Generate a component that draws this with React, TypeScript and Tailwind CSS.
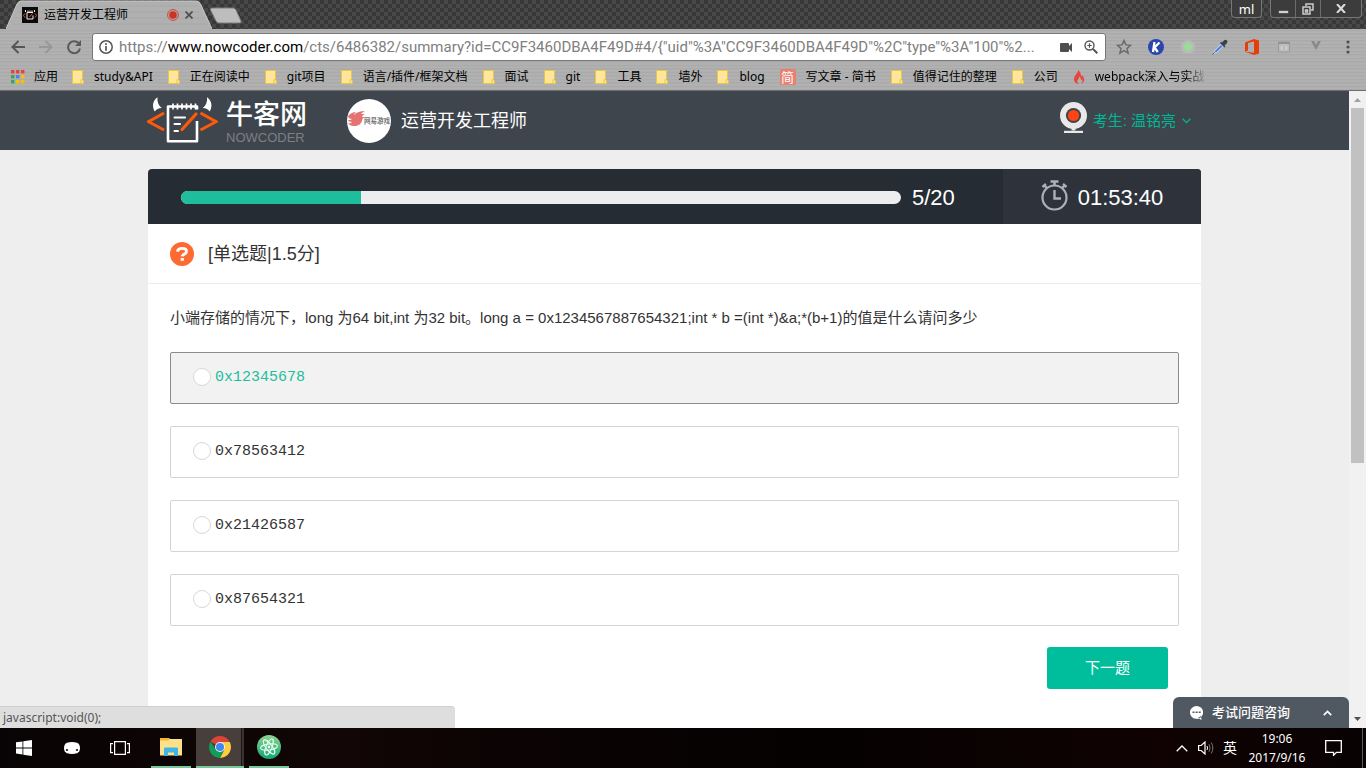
import { useState } from "react";
import type { ReactNode } from "react";

const UI = "font-['Noto_Sans','Noto_Sans_CJK_SC',sans-serif]";
const BRUSHED =
  "bg-[#b0b0b0] bg-[repeating-linear-gradient(0deg,#a6a6a6_0px,#b6b6b6_2px,#a8a8a8_3px,#b3b3b3_5px,#acacac_7px)]";

function Folder() {
  return (
    <svg className="h-4 w-3 shrink-0" viewBox="0 0 12 16">
      <path d="M.5 1.500h10v9.500l1 .8v2.700H.5z" fill="#ffe69a" stroke="#e8c545" />
      <path d="M9 14.500v-3.800h1.500" fill="none" stroke="#e8c545" />
    </svg>
  );
}

function AppsGrid() {
  const colors = ["#ea4335", "#ea4335", "#ea4335", "#34a853", "#4285f4", "#fbbc05", "#34a853", "#fbbc05", "#fbbc05"];
  return (
    <svg className="size-[14px] shrink-0" viewBox="0 0 14 14">
      {colors.map((c, i) => (
        <rect key={i} x={(i % 3) * 5} y={Math.floor(i / 3) * 5} width="3.4" height="3.4" fill={c} />
      ))}
    </svg>
  );
}

function Jian() {
  return (
    <span className="flex size-4 shrink-0 items-center justify-center bg-[#ea8070] text-[13px] leading-4 text-white">
      简
    </span>
  );
}

function Flame() {
  return (
    <svg className="h-4 w-3 shrink-0" viewBox="0 0 12 16">
      <path d="M5 1c.5 3-3.500 4.800-4 8.500C.7 12.500 3 15 6 15c-2-1-2.300-2.800-1-4.500 1-1.200 1.200-2 1-3 1.600 1 2.400 2.500 2 4 .8-.3 1.200-.8 1.300-1.500.7 1.800 0 3.700-1.500 4.800 2.700-.8 3.900-3 3.200-5.300-.4-1.500-1.300-2.200-1.600-3.300-.5.6-.6 1-.6 1.600C7.500 6 8.300 3.500 5 1z" fill="#e8443a" />
    </svg>
  );
}

const bookmarks: { label: string; icon?: ReactNode }[] = [
  { label: "study&API" },
  { label: "正在阅读中" },
  { label: "git项目" },
  { label: "语言/插件/框架文档" },
  { label: "面试" },
  { label: "git" },
  { label: "工具" },
  { label: "墙外" },
  { label: "blog" },
  { label: "写文章 - 简书", icon: <Jian /> },
  { label: "值得记住的整理" },
  { label: "公司" },
];

function TitleBar() {
  return (
    <div className="flex h-[29px] items-start justify-between overflow-hidden bg-[#3f3f3f] bg-[conic-gradient(#484848_25%,#383838_0_50%,#484848_0_75%,#383838_0)] bg-[size:8px_8px]">
      <div className="flex items-start pl-[6px]">
        <div className="relative h-[29px] w-[206px]">
          <svg className="absolute inset-0 size-full" viewBox="0 0 206 29">
            <path d="M0 29 11 4Q12.500 1 15 1H190Q193 1 194.500 4L206 29z" fill="#b0b0b0" />
            <path d="M0 29 11 4Q12.500 1 15 1H190Q193 1 194.500 4L206 29" fill="none" stroke="#c9c9c9" />
            <path d="M14 6h178M11 12h182M9 18h190M6 24h196" stroke="#a8a8a8" />
          </svg>
          <div className={`relative flex h-[29px] items-center pl-4 text-xs text-black ${UI}`}>
            <svg className="size-4" viewBox="0 0 16 16">
              <path d="M0 0h16v16H0z" fill="#0b0b0b" />
              <path d="M3.500 3v2M12.500 3v2M5 5.500V12h6V8.500M5 5.500h6M6 3.500v2M8 3.500v2M10 3.500v2" fill="none" stroke="#eee" />
              <path d="m3 6.500-1.500 2 1.500 2M13 6.500l1.500 2-1.500 2M10.500 6.500 7.500 10" fill="none" stroke="#e0502e" />
            </svg>
            <span className="ml-[6px] flex-1">运营开发工程师</span>
            <svg className="size-3" viewBox="0 0 12 12">
              <circle cx="6" cy="6" r="5.400" fill="none" stroke="#cf4436" />
              <circle cx="6" cy="6" r="3.800" fill="#cb3324" />
            </svg>
            <button aria-label="关闭标签页" className="mr-[19px] ml-[6px]">
              <svg className="size-[8px]" viewBox="0 0 8 8">
                <path d="m.5.5 7 7m0-7-7 7" stroke="#4d4d4d" strokeWidth="1.700" />
              </svg>
            </button>
          </div>
        </div>
        <button aria-label="新标签页" className="mt-[7px] -ml-[3px]">
          <svg className="h-[17px] w-[34px]" viewBox="0 0 34 17">
            <path d="M3.500 1H24q2 0 3 2l5 11q.8 2-1.500 2H10q-2 0-3-2L1.500 3q-.8-2 2-2z" fill="#bdbdbd" stroke="#7d7d7d" />
          </svg>
        </button>
      </div>
      <div className="flex gap-2 pr-1">
        <button className={`h-[18px] w-[31px] rounded-b border border-t-0 border-[#777] bg-[#3c3c3c] text-[13px] leading-[18px] text-white ${UI}`}>
          ml
        </button>
        <div className="flex h-[18px] rounded-b border border-t-0 border-[#777] bg-[#3c3c3c]">
          <button aria-label="最小化" className="flex w-6 items-center justify-center">
            <svg className="h-3 w-[11px]" viewBox="0 0 11 12"><path d="M.5 7.500h10v3H.5z" fill="#d0d0d0" stroke="#222" strokeWidth=".5" /></svg>
          </button>
          <button aria-label="还原" className="flex w-[26px] items-center justify-center border-x border-[#6c6c6c]">
            <svg className="size-3" viewBox="0 0 12 12" fill="none" stroke="#ccc" strokeWidth="1.500">
              <path d="M4 3V1h7v6H9" /><path d="M1 4h7v7H1zM3.500 7h2v2h-2z" />
            </svg>
          </button>
          <button aria-label="关闭" className="flex w-[40px] items-center justify-center">
            <svg className="h-[9px] w-[10px]" viewBox="0 0 10 9"><path d="m1 0 8 9M9 0 1 9" stroke="#ddd" strokeWidth="2" /></svg>
          </button>
        </div>
      </div>
    </div>
  );
}

function ToolButton({ label, children }: { label: string; children: ReactNode }) {
  return (
    <button aria-label={label} className="flex h-7 w-8 items-center justify-center">
      {children}
    </button>
  );
}

const URL_TAIL = '/cts/6486382/summary?id=CC9F3460DBA4F49D#4/{"uid"%3A"CC9F3460DBA4F49D"%2C"type"%3A"100"%2...';

function Toolbar() {
  return (
    <div className="flex h-9 items-center pr-[2px] pl-1">
      <button aria-label="后退" className="flex w-7 justify-center">
        <svg className="size-[14px]" viewBox="0 0 14 14" fill="none" stroke="#555" strokeWidth="2"><path d="M14 7H1.500M7.500 1l-6 6 6 6" /></svg>
      </button>
      <button aria-label="前进" className="flex w-7 justify-center">
        <svg className="size-[14px]" viewBox="0 0 14 14" fill="none" stroke="#979797" strokeWidth="2"><path d="M0 7h12.500M6.500 1l6 6-6 6" /></svg>
      </button>
      <button aria-label="重新加载" className="flex w-7 justify-center">
        <svg className="size-[14px]" viewBox="0 0 14 14"><path d="M11.600 3.200A6 6 0 1 0 13 8.500" fill="none" stroke="#5a5a5a" strokeWidth="2" /><path d="M14 0v6H8z" fill="#5a5a5a" /></svg>
      </button>
      <div className="ml-1 flex h-7 min-w-0 flex-1 items-center rounded-[3px] border border-[#777] bg-white pr-[7px] pl-[6px]">
        <svg className="size-[14px] shrink-0" viewBox="0 0 14 14"><circle cx="7" cy="7" r="6.200" fill="none" stroke="#555" strokeWidth="1.500" /><path d="M7 3.200v1.700M7 6v4.800" stroke="#555" strokeWidth="1.700" /></svg>
        <div className="relative ml-[6px] min-w-0 flex-1 font-[Roboto,'Noto_Sans',sans-serif] text-[15px] leading-6">
          <div aria-hidden className="overflow-hidden whitespace-nowrap text-[#808080]">
            https://<span className="text-black">www.nowcoder.com</span>{URL_TAIL}
          </div>
          <input aria-label="地址" className="absolute inset-0 w-full bg-transparent text-transparent outline-none" />
        </div>
        <svg className="h-[9px] w-3 shrink-0" viewBox="0 0 12 9"><path d="M0 1q0-1 1-1h7q1 0 1 1v2l3-3v9L9 6v2q0 1-1 1H1Q0 9 0 8z" fill="#4f4f4f" /></svg>
        <svg className="ml-3 size-[14px] shrink-0" viewBox="0 0 14 14" fill="none" stroke="#555"><circle cx="5.500" cy="5.500" r="4.500" strokeWidth="1.400" /><path d="m9 9 4.300 4.300" strokeWidth="2" /><path d="M3.300 5.500h4.400M5.500 3.300v4.400" strokeWidth="1.200" /></svg>
      </div>
      <div className="ml-[2px] flex">
        <ToolButton label="收藏">
          <svg className="size-4" viewBox="0 0 16 16"><path d="m8 1.500 1.900 4.400 4.700.4-3.600 3.100 1.100 4.700L8 11.600l-4.100 2.500L5 9.400 1.400 6.300l4.700-.4z" fill="none" stroke="#6b6b6b" strokeWidth="1.500" /></svg>
        </ToolButton>
        <ToolButton label="扩展 K">
          <svg className="size-4" viewBox="0 0 16 16"><circle cx="8" cy="8" r="8" fill="#2a44b0" /><path d="M6.500 3 5 13M11.500 3.500 6.500 8.500 9.800 13" fill="none" stroke="#fff" strokeWidth="2.300" /></svg>
        </ToolButton>
        <ToolButton label="在线状态">
          <svg className="size-4" viewBox="0 0 16 16"><circle cx="8" cy="8" r="7" fill="#b9b9b9" /><circle cx="8" cy="8" r="4.200" fill="#98dc95" /></svg>
        </ToolButton>
        <ToolButton label="取色器">
          <svg className="size-4" viewBox="0 0 16 16"><path d="M1.500 14.500 2.500 12 9 5.500 11 7.500 4.500 13.500z" fill="#3f7ee0" stroke="#e8eefc" strokeWidth=".8" /><path d="m.5 15.500 2-2" stroke="#555" /><path d="m8 4 4.500 4.500 1-1-1-1 2.500-2.500q1-1.500 0-2.500T12.500 1L10 3.500l-1-.8z" fill="#3a3f49" /></svg>
        </ToolButton>
        <ToolButton label="Office">
          <svg className="h-4 w-[14px]" viewBox="0 0 14 16"><path d="M0 3.500 9 0l5 1.500v13L9 16 0 12.700l9 1V2.500L3 4v7.500l-3 1.200z" fill="#e53e0b" /></svg>
        </ToolButton>
        <ToolButton label="代码片段">
          <svg className="h-3 w-3" viewBox="0 0 12 12"><path d="M.5 1h11v10H.5z" fill="#bcbcbc" stroke="#9a9a9a" /><path d="M0 1h12v2H0z" fill="#929292" /><path d="M4.500 5 3 7l1.500 2m3-4L9 7 7.500 9" fill="none" stroke="#ddd" /></svg>
        </ToolButton>
        <ToolButton label="Vue">
          <svg className="-mt-1 h-[9px] w-[10px]" viewBox="0 0 10 9"><path d="M0 0h3l2 4 2-4h3L5 9z" fill="#888" /></svg>
        </ToolButton>
        <ToolButton label="菜单">
          <svg className="h-[14px] w-[4px]" viewBox="0 0 4 14" fill="#505050"><circle cx="2" cy="2" r="1.600" /><circle cx="2" cy="7" r="1.600" /><circle cx="2" cy="12" r="1.600" /></svg>
        </ToolButton>
      </div>
    </div>
  );
}

function BookmarksBar() {
  return (
    <nav className={`flex h-[25px] items-center overflow-hidden pb-[2px] pl-[11px] text-xs whitespace-nowrap text-black ${UI}`}>
      <a href="#apps" className="mr-[14px] flex items-center gap-[9px]"><AppsGrid />应用</a>
      {bookmarks.map((b) => (
        <a key={b.label} href="#bookmark" className="mr-[15px] flex shrink-0 items-center gap-[10px]">
          {b.icon ?? <Folder />}
          {b.label}
        </a>
      ))}
      <a href="#webpack" className="flex w-[134px] shrink-0 items-center gap-[10px] overflow-hidden [mask-image:linear-gradient(to_right,black_85%,transparent)]">
        <Flame />
        webpack深入与实战
      </a>
    </nav>
  );
}

function Logo() {
  return (
    <a href="#home" aria-label="牛客网" className="flex items-center gap-2">
      <svg className="h-[50px] w-[71px]" viewBox="0 0 71 50" fill="none">
        <path d="M10.500 1.300C6 4.500 4.500 10 7.800 15.500c1.500-2.200 3.700-3.200 7-3.500C11.500 9.500 10 6 10.500 1.300zM60 1.300C64.500 4.500 66 10 62.700 15.500c-1.500-2.200-3.700-3.200-7-3.500C59 9.500 60.500 6 60 1.300z" fill="#fff" />
        <path d="M17 17 1.500 25.700 17 34M53.500 17 69 25.700 53.500 34" stroke="#ff5a0a" strokeWidth="3" />
        <path d="M50 13.500v-3H21v34.800h29V25" stroke="#fff" strokeWidth="2.600" strokeLinejoin="round" />
        <path d="M26 7.500v6M30.500 7.500v6M35 7.500v6M39.500 7.500v6M44 7.500v6M48.500 7.500v6" stroke="#fff" strokeWidth="1.700" />
        <path d="M27.500 21.500H38M27.500 28H33M27.500 35H31" stroke="#fff" strokeWidth="2" strokeLinecap="round" />
        <path d="m49 18-14 15.500" stroke="#ff5a0a" strokeWidth="3.200" strokeLinecap="round" />
      </svg>
      <span className="flex flex-col">
        <span className="font-['Noto_Sans_CJK_SC',sans-serif] text-[27px] leading-[34px] font-medium text-white">牛客网</span>
        <span className="font-['Liberation_Sans',sans-serif] text-[13px] leading-4 text-[#7c8086]">NOWCODER</span>
      </span>
    </a>
  );
}

function SiteHeader() {
  return (
    <header className="bg-[#3e454d]">
      <div className="mx-auto flex h-[59px] max-w-[1055px] items-center justify-between pr-[11px]">
        <div className="flex items-center">
          <Logo />
          <svg className="ml-10 size-11" viewBox="0 0 44 44">
            <circle cx="22" cy="22" r="22" fill="#fff" />
            <path d="M1 17c3-3 5-4 8-4-1 1-2 2-2 3 3-3 6-4 11-4-2 1-3 2-4 3h4c-2 1-3 2-3 3h3c-2 1-3 2-3 4-1 3-4 5-8 5-3 0-5-1-6-3 2 1 3 0 4-1-2 0-4-1-4-2 2 0 3 0 4-1-2 0-4-1-4-3z" fill="#e57372" />
            <text x="17" y="23.500" fill="#777" fontSize="6.500" fontWeight="700" fontFamily="Noto Sans CJK SC, sans-serif">网易游戏</text>
            <path d="M17 25.500h2m3 0h2m3 0h2m3 0h2m3 0h2" stroke="#ccc" />
          </svg>
          <h1 className="ml-[10px] text-lg leading-6 text-white">运营开发工程师</h1>
        </div>
        <button className="flex items-center text-[15px] leading-6 text-[#00b896]">
          <svg className="mb-[6px] h-[31px] w-[27px]" viewBox="0 0 27 31">
            <circle cx="13.500" cy="13.500" r="13.500" fill="#e8e8e8" />
            <path d="M11.500 26h4v2.500h-4z" fill="#e8e8e8" />
            <path d="M4 28.800h19V31H4z" fill="#e8e8e8" />
            <circle cx="13.500" cy="13.500" r="7.600" fill="#3e454d" />
            <circle cx="13.500" cy="13.500" r="5.600" fill="#ff4314" />
          </svg>
          <span className="ml-[6px]">考生: 温铭亮</span>
          <svg className="ml-[6px] h-[6px] w-[9px]" viewBox="0 0 9 6"><path d="m.7.800 3.800 3.800L8.300.8" fill="none" stroke="#00b896" strokeWidth="1.300" /></svg>
        </button>
      </div>
    </header>
  );
}

const options = ["0x12345678", "0x78563412", "0x21426587", "0x87654321"];

function Exam() {
  const [choice, setChoice] = useState("");
  return (
    <main className="mx-auto mt-[19px] w-full max-w-[1053px] flex-1 rounded-t bg-white">
      <div className="flex h-[55px] overflow-hidden rounded-t bg-[#252c33] text-[22px] text-white">
        <div className="flex flex-1 items-center gap-[11px] pt-px pl-[33px]">
          <div role="progressbar" aria-label="答题进度" aria-valuenow={5} aria-valuemin={0} aria-valuemax={20} className="h-[13px] w-[720px] overflow-hidden rounded-full bg-[#ecedef]">
            <div className="h-full w-1/4 bg-[#1ebe9c]" />
          </div>
          <span>5/20</span>
        </div>
        <div className="flex w-[198px] items-center justify-center gap-[10px] bg-[#2e333b] pt-px">
          <svg className="mb-1 h-[31px] w-[27px]" viewBox="0 0 27 31" fill="none" stroke="#a9b1bd">
            <circle cx="13.500" cy="17.500" r="12" strokeWidth="2.200" />
            <path d="M9.500 1.500h8M13.500 1.500v4" strokeWidth="2.600" />
            <path d="m1.500 7 3.500-3M25.500 7 22 4M3.500 5.500 6 8M23.500 5.500 21 8" strokeWidth="2.400" />
            <path d="M13.500 10v8.500h6.500" strokeWidth="2.400" />
          </svg>
          <span>01:53:40</span>
        </div>
      </div>
      <div className="flex h-[60px] items-center gap-[14px] border-b border-[#ebebeb] pl-[22px] text-lg text-[#333]">
        <svg className="size-6" viewBox="0 0 24 24">
          <circle cx="12" cy="12" r="12" fill="#ff6a33" />
          <path d="M7.500 9.600C7.700 7.300 9.500 6.400 12 6.400c2.700 0 4.500 1.100 4.500 3 0 2.700-4 2.500-4.200 5" fill="none" stroke="#fff" strokeWidth="2.900" />
          <path d="M10.700 16h3.200v2.800h-3.200z" fill="#fff" />
        </svg>
        <h2>[单选题|1.5分]</h2>
      </div>
      <form className="px-[22px] pt-[22px] pb-8" onSubmit={(e) => e.preventDefault()}>
        <fieldset>
          <legend className="mb-[22px] text-[15px] leading-6 text-[#333]">
            小端存储的情况下，long 为64 bit,int 为32 bit。long a = 0x1234567887654321;int * b =(int *)&amp;a;*(b+1)的值是什么请问多少
          </legend>
          <div className="flex flex-col gap-[22px]">
            {options.map((o, i) => (
              <label
                key={o}
                className={
                  i === 0
                    ? "flex h-[52px] items-center gap-1 rounded-xs border border-[#8c8c8c] bg-[#f2f2f2] pb-[2px] pl-[22px] text-[#1ebe9c]"
                    : "flex h-[52px] items-center gap-1 rounded-xs border border-[#d4d4d4] bg-white pb-[2px] pl-[22px] text-[#333]"
                }
              >
                <input
                  type="radio"
                  name="answer"
                  checked={choice === o}
                  onChange={() => setChoice(o)}
                  className="size-[18px] appearance-none rounded-full border border-[#d8d8d8] bg-white checked:border-[5px] checked:border-[#1ebe9c]"
                />
                <span className="pt-px font-['Liberation_Mono',monospace] text-[15px] leading-5">{o}</span>
              </label>
            ))}
          </div>
        </fieldset>
        <div className="mt-[21px] flex justify-end pr-[11px]">
          <button className="h-[42px] w-[121px] rounded-[3px] bg-[#00be9c] text-[15px] text-white">下一题</button>
        </div>
      </form>
    </main>
  );
}

function Scrollbar() {
  return (
    <div aria-hidden className="flex w-[17px] shrink-0 flex-col items-center bg-[#f1f1f1] py-[7px]">
      <svg className="h-1 w-[7px] shrink-0" viewBox="0 0 7 4"><path d="M0 4 3.500 0 7 4z" fill="#a0a0a0" /></svg>
      <div className="mt-[6px] h-[57%] w-[13px] bg-[#c1c1c1]" />
      <svg className="mt-auto h-1 w-[7px] shrink-0" viewBox="0 0 7 4"><path d="M0 0h7L3.500 4z" fill="#505050" /></svg>
    </div>
  );
}

function Taskbar() {
  return (
    <footer className={`flex h-10 shrink-0 items-stretch justify-between bg-[#080203] bg-[linear-gradient(to_right,#080304,#120606_25%,#080203_45%,#050101_60%,#100202_85%,#080203)] text-white ${UI}`}>
      <div className="flex">
        <button aria-label="开始" className="flex w-12 items-center justify-center">
          <svg className="size-4" viewBox="0 0 16 16" fill="#fff"><path d="M0 2.300 6.500 1.400v6.100H0zM7.300 1.300 16 0v7.500H7.300zM0 8.400h6.500v6.100L0 13.600zM7.300 8.400H16V16l-8.700-1.300z" /></svg>
        </button>
        <button aria-label="助手" className="flex w-12 items-center justify-center">
          <svg className="h-3 w-4" viewBox="0 0 16 12"><path d="M3 .8Q8-.6 13 .8q3 1.400 3 5.200T13 11.200Q8 12.600 3 11.200 0 9.800 0 6T3 .8z" fill="#fff" /><circle cx="3" cy="8" r="1.100" fill="#111" /><circle cx="13" cy="8" r="1.100" fill="#111" /></svg>
        </button>
        <button aria-label="任务视图" className="flex w-12 items-center justify-center">
          <svg className="h-[14px] w-5" viewBox="0 0 20 14" fill="none" stroke="#fff" strokeWidth="1.200"><path d="M4.600.600h10.800v12.800H4.600zM3 2.600H.6v9H3M17 2.600h2.400v9H17" /></svg>
        </button>
        <button aria-label="文件资源管理器" className="mr-[5px] ml-[7px] flex w-10 items-center justify-center border-b-2 border-[#76c79a]">
          <svg className="h-[18px] w-[22px]" viewBox="0 0 22 18"><path d="M0 0h9l1 1h12v16.500H0z" fill="#fde08a" /><path d="M0 0h9v2.500H0z" fill="#f5b921" /><path d="M4 10.500Q4 9.500 5 9.500h12q1 0 1 1V18h-4v-3.500H8V18H4z" fill="#3fb4e8" /></svg>
        </button>
        <button aria-label="Chrome" className="flex w-12 items-stretch border-b-2 border-b-[#76c79a] bg-[#483e3c]">
          <span className="flex flex-1 items-center justify-center pl-[3px]">
            <svg className="size-[22px]" viewBox="0 0 22 22">
              <path d="M11 11 1.500 5.500A11 11 0 0 1 20.500 5.500z" fill="#db4437" />
              <path d="M11 6h9.800A11 11 0 0 1 11 22l4.300-8.500z" fill="#ffcd40" />
              <path d="M1.500 5.500 6.700 13.500 15.300 13.500 11 22A11 11 0 0 1 1.500 5.500z" fill="#0f9d58" />
              <circle cx="11" cy="11" r="5" fill="#f1f1f1" />
              <circle cx="11" cy="11" r="4" fill="#4285f4" />
            </svg>
          </span>
          <span className="w-[3px] border-l border-[#1c1515] bg-[#3b3230]" />
        </button>
        <button aria-label="Atom" className="ml-[5px] flex w-10 items-center justify-center border-b-2 border-[#76c79a]">
          <svg className="size-6" viewBox="0 0 24 24">
            <defs><linearGradient id="atom" x2="0" y2="1"><stop stopColor="#8fd38f" /><stop offset="1" stopColor="#12a672" /></linearGradient></defs>
            <circle cx="12" cy="12" r="12" fill="url(#atom)" />
            <g fill="none" stroke="#e6fff2" strokeWidth="1.100"><ellipse cx="12" cy="12" rx="8.500" ry="3" transform="rotate(-8 12 12)" /><ellipse cx="12" cy="12" rx="8.500" ry="3" transform="rotate(52 12 12)" /><ellipse cx="12" cy="12" rx="8.500" ry="3" transform="rotate(112 12 12)" /></g>
            <circle cx="12" cy="12" r="1.400" fill="#e6fff2" />
          </svg>
        </button>
      </div>
      <div className="flex items-center">
        <button aria-label="显示隐藏的图标"><svg className="h-[7px] w-3" viewBox="0 0 12 7"><path d="m.7 6.300 5.300-5.300 5.300 5.300" fill="none" stroke="#fff" strokeWidth="1.300" /></svg></button>
        <button aria-label="音量" className="ml-[10px]">
          <svg className="h-[14px] w-4" viewBox="0 0 16 14" fill="none" stroke="#fff"><path d="M.6 4.500h2.600L7 1v12L3.200 9.500H.6z" strokeWidth="1.200" /><path d="M9 5q1.200 2 0 4" /><path d="M11 3.200q2.200 3.800 0 7.600M13.200 1.500q3.300 5.500 0 11" stroke="#777" /></svg>
        </button>
        <button className="ml-[9px] text-sm">英</button>
        <time className="ml-[10px] w-[60px] text-center text-xs leading-[19px]">
          19:06
          <br />
          2017/9/16
        </time>
        <button aria-label="通知" className="mr-5 ml-[18px]">
          <svg className="h-4 w-[17px]" viewBox="0 0 17 16"><path d="M.7.700h15.600v11.600h-4.800L8.500 15.300v-3H.7z" fill="none" stroke="#fff" strokeWidth="1.300" /></svg>
        </button>
        <div className="h-10 w-1 border-l border-[#5a5a5a]" />
      </div>
    </footer>
  );
}

export default function App() {
  return (
    <div className="flex h-screen flex-col font-['Liberation_Sans','Noto_Sans_CJK_SC',sans-serif]">
      <div className="shrink-0">
        <TitleBar />
        <div className={`border-b border-[#6e6e6e] ${BRUSHED}`}>
          <Toolbar />
          <BookmarksBar />
        </div>
      </div>
      <div className="relative flex min-h-0 flex-1">
        <div className="flex min-w-0 flex-1 flex-col overflow-hidden bg-[#eeeeee]">
          <SiteHeader />
          <Exam />
        </div>
        <Scrollbar />
        <div className={`absolute bottom-0 left-0 h-[22px] w-1/3 rounded-tr border-t border-[#cfcfcf] bg-[#dedede] pl-[3px] text-xs leading-[21px] text-[#555] ${UI}`}>
          javascript:void(0);
        </div>
        <button className="absolute right-[17px] bottom-0 flex h-[31px] w-[176px] items-center rounded-t-md bg-[#505862] pr-[17px] pl-[17px] text-[13px] font-medium text-white">
          <svg className="h-[14px] w-[13px]" viewBox="0 0 13 14"><path d="M6.500 0a6.500 6.300 0 1 1 0 12.800A6.500 6.300 0 0 1 6.500 0zM8 12l3.500 2-.5-4z" fill="#fff" /><path d="M2.500 6.200h2m1.100 0h2m1.100 0h2" stroke="#505862" strokeWidth="1.500" /></svg>
          <span className="ml-[9px] flex-1 text-left">考试问题咨询</span>
          <svg className="h-[6px] w-[9px]" viewBox="0 0 9 6"><path d="M.8 5.200 4.500 1.500l3.700 3.700" fill="none" stroke="#fff" strokeWidth="1.700" /></svg>
        </button>
      </div>
      <Taskbar />
    </div>
  );
}
